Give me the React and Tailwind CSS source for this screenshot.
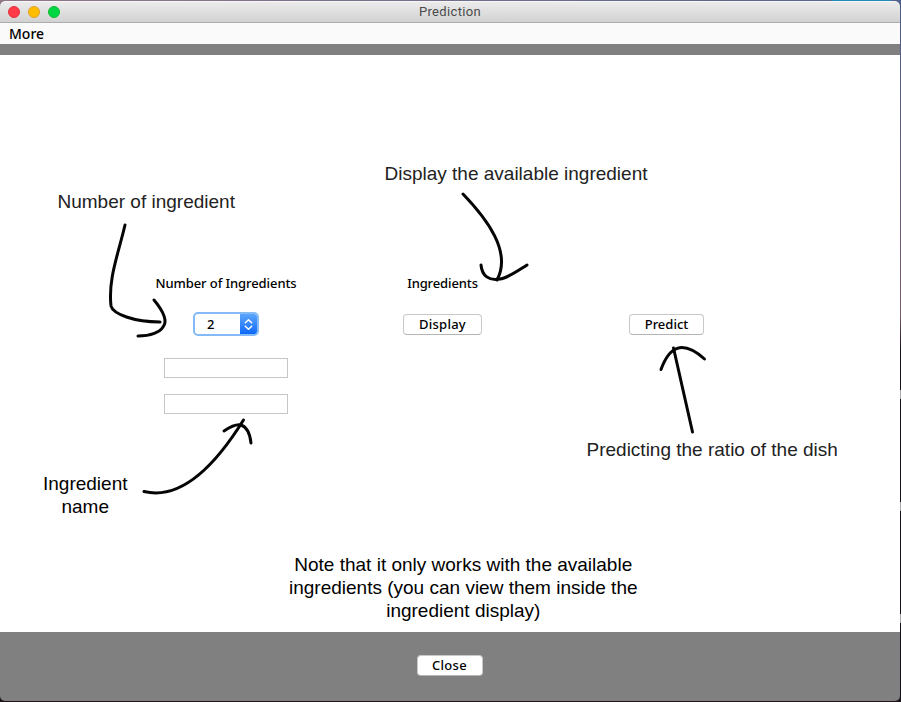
const uiFont = "font-['Noto_Sans','Open_Sans',sans-serif]";
const noteFont = "font-['Liberation_Sans',sans-serif]";

function TitleBar() {
  return (
    <header className="relative flex h-[22px] shrink-0 items-center gap-2 rounded-t-[5px] border-b border-[#adadad] border-t border-t-[#f6f6f6] bg-linear-to-b from-[#ebebeb] to-[#d2d2d2] pl-2">
      <span className="size-3 rounded-full border border-[#e0333e] bg-[#ff3b47]" />
      <span className="size-3 rounded-full border border-[#dfa023] bg-[#ffbd00]" />
      <span className="size-3 rounded-full border border-[#12b931] bg-[#00d742]" />
      <h1 className="absolute inset-x-0 text-center font-[Roboto,sans-serif] text-[13px] leading-5 tracking-[0.34px] text-[#4a4a4a]">
        Prediction
      </h1>
    </header>
  );
}

function Button({ className, children }) {
  return (
    <button
      className={`flex h-[21px] items-center justify-center rounded-[4px] border border-[#c8c8c8] border-b-[#b4b4b4] bg-white text-[13px] font-medium leading-none text-black ${className}`}
    >
      {children}
    </button>
  );
}

function CountSelect() {
  return (
    <div className="flex h-6 w-[66px] overflow-hidden rounded-[5px] border-2 border-[#84bbf6] bg-white">
      <span className="flex flex-1 items-center pl-[12px] text-[13px] font-medium leading-none">2</span>
      <span className="flex w-[17px] items-center justify-center bg-linear-to-b from-[#5ba6fb] to-[#0b66fa]">
        <svg width="9" height="13" viewBox="0 0 9 13" fill="none" stroke="white" strokeWidth="1.5" strokeLinecap="round" strokeLinejoin="round">
          <path d="M1.3 4.7 4.5 1.7 7.7 4.7M1.3 8.3 4.5 11.3 7.7 8.3" />
        </svg>
      </span>
    </div>
  );
}

function Form() {
  return (
    <div className="grid grid-cols-[216px_217px_231px] grid-rows-[20px_24px] justify-items-center gap-y-[19px] pl-[118px] pt-[218px]">
      <label className="whitespace-nowrap text-[13px] font-medium leading-5 tracking-[-0.08px]">Number of Ingredients</label>
      <label className="whitespace-nowrap text-[13px] font-medium leading-5 tracking-[-0.12px]">Ingredients</label>
      <span />
      <CountSelect />
      <Button className="mt-[2px] w-[79px] tracking-[0.25px]">Display</Button>
      <Button className="mt-[2px] w-[75px]">Predict</Button>
      <div className="mt-[3px] flex flex-col gap-4">
        <input className="h-5 w-[124px] border border-[#c6c6c6] bg-white" />
        <input className="h-5 w-[124px] border border-[#c6c6c6] bg-white" />
      </div>
    </div>
  );
}

function Note({ className, children }) {
  return (
    <p className={`absolute whitespace-nowrap text-center text-[19px] leading-[23px] ${noteFont} ${className}`}>
      {children}
    </p>
  );
}

function Annotations() {
  return (
    <div className="pointer-events-none absolute inset-0">
      <svg className="absolute inset-0" width="901" height="702" fill="none" stroke="#050505" strokeWidth="3" strokeLinecap="round" strokeLinejoin="round">
        <path d="M125 225C118 255 108 279 111 306C113 314 134 322 160 322" />
        <path d="M154 300C164 312 168 321 163 327C160 332 151 336 138 336" />
        <path d="M463 194C487 219 512 252 497 280" />
        <path d="M481 265C482 276 489 281 500 279C508 278 519 270 527 265" />
        <path d="M692.500 432 673.500 348" />
        <path d="M661 369.500C669 347 682 339 704.500 359" />
        <path d="M144 491.500C183 501 218 461 243.500 420" />
        <path d="M224 431C230 427 237 424 241 425C247 427 250 434 251 443" />
      </svg>
      <Note className="left-[57.500px] top-[190px] text-[#222]">Number of ingredient</Note>
      <Note className="left-[384.500px] top-[162px] text-[#222]">Display the available ingredient</Note>
      <Note className="left-[586.500px] top-[438px] text-[#222]">Predicting the ratio of the dish</Note>
      <Note className="left-[43px] top-[472px] text-black">
        Ingredient
        <br />
        name
      </Note>
      <Note className="left-[289px] top-[553px] text-black">
        Note that it only works with the available
        <br />
        ingredients (you can view them inside the
        <br />
        ingredient display)
      </Note>
    </div>
  );
}

function DesktopEdge() {
  return (
    <div className="absolute right-0 top-0 flex h-[702px] w-px flex-col bg-linear-to-b from-[#4a5c8c] from-0% via-[#775a68] via-45% to-[#151018] to-50%">
      <span className="mt-[390px] h-[9px] bg-[#a9a9ad]" />
      <span className="mt-[103px] h-[9px] bg-[#a9a9ad]" />
      <span className="mt-[103px] h-[9px] bg-[#a9a9ad]" />
    </div>
  );
}

export default function App() {
  return (
    <div className={`relative flex h-[702px] w-[901px] flex-col overflow-hidden bg-[#1c1419] text-black ${uiFont}`}>
      <div className="flex h-[6px] shrink-0 bg-linear-to-r from-[#907887] to-[#53638d] pl-[832px]">
        <span className="h-px w-[59px] bg-[#218bb5]" />
      </div>
      <DesktopEdge />
      <div className="-mt-[5px] flex h-[700px] w-[900px] shrink-0 flex-col overflow-hidden rounded-[5px]">
        <TitleBar />
        <nav className="flex h-[21px] shrink-0 items-center bg-[#fafafa] pl-[9px] text-[14px] font-medium leading-none">
          More
        </nav>
        <div className="h-[11px] shrink-0 bg-[#808080]" />
        <main className="h-[577px] shrink-0 bg-white">
          <Form />
        </main>
        <footer className="flex flex-1 justify-center bg-[#808080] pr-px pt-[23px]">
          <Button className="w-[66px] tracking-[0.3px]">Close</Button>
        </footer>
      </div>
      <Annotations />
    </div>
  );
}
